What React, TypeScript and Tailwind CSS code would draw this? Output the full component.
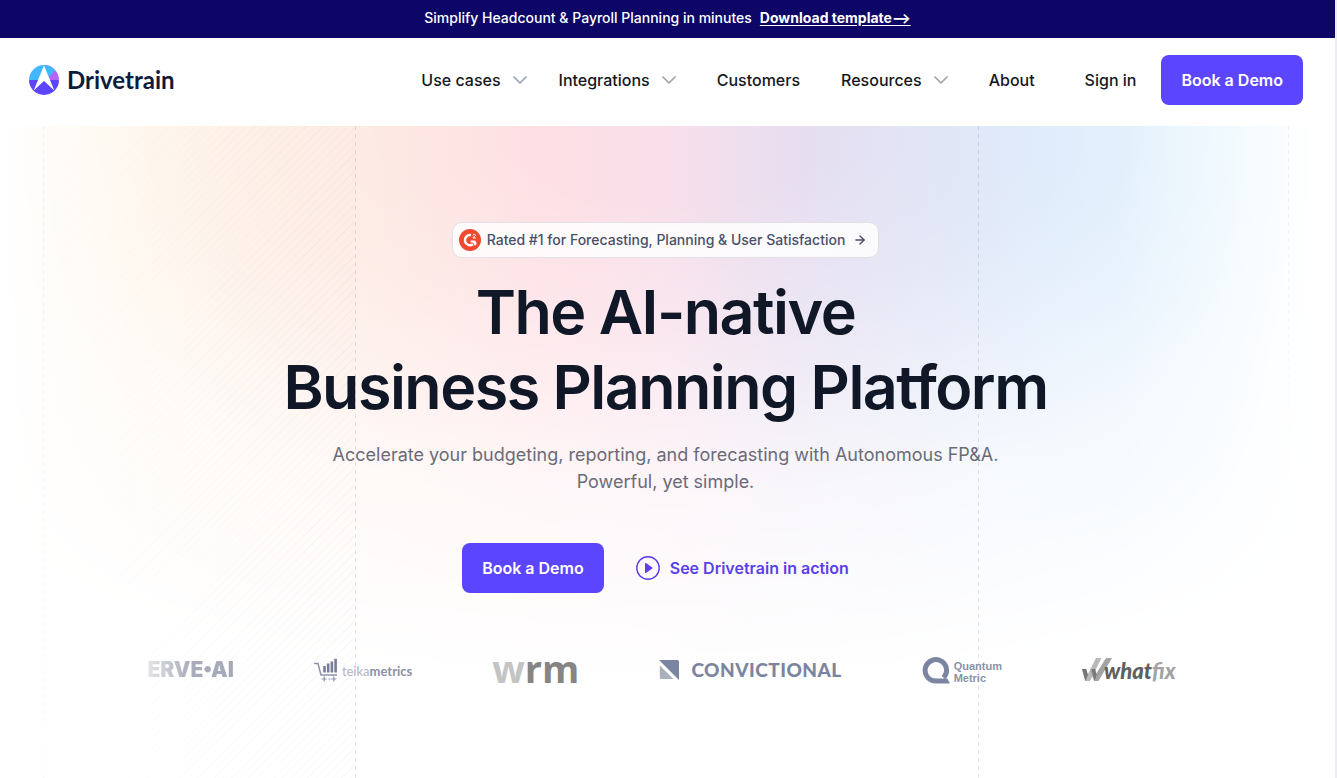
import React from 'react';
import { ArrowRight } from 'lucide-react';

interface NavItem {
  label: string;
  hasMenu?: boolean;
}

const navItems: NavItem[] = [
  { label: 'Use cases', hasMenu: true },
  { label: 'Integrations', hasMenu: true },
  { label: 'Customers' },
  { label: 'Resources', hasMenu: true },
  { label: 'About' },
  { label: 'Sign in' },
];

const Chevron: React.FC = () => (
  <svg width="14" height="8" viewBox="0 0 14 8" fill="none" stroke="#9ca3af" strokeWidth="1.7" strokeLinecap="round" strokeLinejoin="round" aria-hidden="true">
    <path d="M1 1l6 6 6-6" />
  </svg>
);

const BrandMark: React.FC = () => (
  <svg width="30" height="30" viewBox="0 0 30 30" aria-hidden="true">
    <defs>
      <clipPath id="brand-disc">
        <circle cx="15" cy="15" r="15" />
      </clipPath>
    </defs>
    <g clipPath="url(#brand-disc)">
      <path d="M0 0h15v15.2H0z" fill="#41b8fd" />
      <path d="M15 0h15v15.2H15z" fill="#b565f5" />
      <path d="M15 0h10.500v6L18 14z" fill="#41b8fd" />
      <path d="M0 15h30v15H0z" fill="#5b45ff" />
      <path d="M15 0.500L25.300 25.500 15 16 4.700 25.500z" fill="#fff" />
    </g>
  </svg>
);

const G2Mark: React.FC = () => (
  <svg width="22" height="22" viewBox="0 0 22 22" aria-hidden="true">
    <circle cx="11" cy="11" r="11" fill="#ef4a2f" />
    <path d="M12 6.100A5.100 5.100 0 1 0 14 15.200" fill="none" stroke="#fff" strokeWidth="2.500" />
    <path d="M11.500 11.600h4.700l1.500 2.600-1.600 2.700-2.300-3.500h-2z" fill="#fff" />
    <path d="M13.900 6.300c.2-1.300 2.600-1.300 2.500.1-.1 1-2.300 1.300-2.400 2.600h2.800" fill="none" stroke="#fff" strokeWidth="1" />
  </svg>
);

const PlayMark: React.FC = () => (
  <svg width="24" height="24" viewBox="0 0 24 24" aria-hidden="true">
    <circle cx="12" cy="12" r="11.200" fill="none" stroke="currentColor" strokeWidth="1.400" />
    <path d="M9 7.500v9c0 .5.5.7.9.4l6.400-4.400c.4-.3.4-.7 0-1L9.900 7.100c-.4-.3-.9-.1-.9.4z" fill="currentColor" />
  </svg>
);

const CartMark: React.FC = () => (
  <svg width="24" height="24" viewBox="0 0 24 24" fill="none" stroke="#8d93a8" aria-hidden="true">
    <path d="M0 5.500h4l3 11.500h16" strokeWidth="1.500" />
    <path d="M10.500 14.500V8M14.200 14.500V5.500M17.900 14.500V3.500M21.600 14.500V.8" stroke="#777e99" strokeWidth="2.600" />
    <path d="M10.200 18.500v5M7.700 21h5M14.500 21h2M19.800 18.500v5M17.300 21h5" strokeWidth="1.200" />
  </svg>
);

const ConvictionalMark: React.FC = () => (
  <svg width="20" height="20" viewBox="0 0 20 20" aria-hidden="true">
    <path d="M0 0h18.500q1.500 0 1.500 1.500V20z" fill="#7b84a0" />
    <path d="M.8 5.500L14.500 19H2.300Q.8 19 .8 17.500z" fill="#aab0bd" />
  </svg>
);

const QuantumMark: React.FC = () => (
  <svg width="28" height="27" viewBox="0 0 28 27" aria-hidden="true">
    <path d="M21.500 20.800A10.700 10.700 0 1 0 13 24" fill="none" stroke="#7b84a0" strokeWidth="5" />
    <path d="M12 21.500h13.200L28 26.500H13z" fill="#7b84a0" />
  </svg>
);

const WhatfixMark: React.FC = () => (
  <svg width="30" height="24" viewBox="0 0 30 24" aria-hidden="true">
    <path d="M0 11h4.300l1.400 5.500L14 0h5.500L8 23H3z" fill="#b9b9b9" />
    <path d="M8 12h4l1 5.500L24 0h6L16.500 23H12z" fill="#a3a3a3" />
    <path d="M0 11h4.300l1.600 6-2.400 6zM9.500 11h3.700l1.400 6-2 6z" fill="#777" />
  </svg>
);

const DemoButton: React.FC = () => (
  <button type="button" className="rounded-lg bg-[#5b45ff] px-5 py-[13px] text-base leading-6 font-semibold whitespace-nowrap text-white">
    Book a Demo
  </button>
);

const Header: React.FC = () => (
  <header className="flex items-center justify-between bg-white pt-[17px] pr-8 pb-[21px] pl-[29px]">
    <a href="#home" className="flex items-center gap-2">
      <BrandMark />
      <span className="font-[Lato] text-2xl leading-8 font-bold text-[#0d1b3e]">Drivetrain</span>
    </a>
    <nav className="flex items-center text-base font-medium whitespace-nowrap text-[#15171e]">
      {navItems.map((item) =>
        item.hasMenu ? (
          <button key={item.label} type="button" className="flex items-center gap-3 px-4">
            {item.label}
            <Chevron />
          </button>
        ) : (
          <a key={item.label} href="#nav" className="px-[25px]">
            {item.label}
          </a>
        )
      )}
      <DemoButton />
    </nav>
  </header>
);

const Guide: React.FC = () => (
  <div className="w-px shrink-0 bg-[repeating-linear-gradient(180deg,rgba(60,50,80,0.13)_0_4px,transparent_4px_8px)]" />
);

// Soft colour wash with the dashed column guides on top of it
const Backdrop: React.FC = () => (
  <div className="pointer-events-none absolute inset-0" aria-hidden="true">
    <div className="absolute inset-0 bg-[linear-gradient(90deg,#ffffff_0%,#fff8ee_4%,#fef0e0_11%,#fdeade_18%,#fde6df_28%,#fee0e4_40%,#f8dfea_50%,#e6def0_60%,#dde2f5_70%,#d7e6fa_78%,#d5e8fb_84%,#e2f3fd_91%,#ffffff_99%)] [mask-image:radial-gradient(ellipse_84%_86%_at_50%_0%,black_14%,rgba(0,0,0,0.75)_36%,rgba(0,0,0,0.25)_66%,transparent_100%)]" />
    <div className="absolute inset-0 grid grid-cols-4 pr-[46px] pl-[43px]">
      <div className="flex">
        <div className="flex [mask-image:linear-gradient(180deg,rgba(0,0,0,0.5),rgba(0,0,0,0.2))]">
          <Guide />
        </div>
        <div className="flex-1 bg-[repeating-linear-gradient(135deg,transparent_0_5px,rgba(120,100,90,0.04)_5px_6px)] [mask-image:linear-gradient(90deg,transparent,black)]" />
      </div>
      <div className="flex">
        <Guide />
      </div>
      <div />
      <div className="flex justify-between">
        <Guide />
        <div className="flex [mask-image:linear-gradient(180deg,rgba(0,0,0,0.5),transparent_60%)]">
          <Guide />
        </div>
      </div>
    </div>
  </div>
);

const CustomerLogos: React.FC = () => (
  <div className="flex h-8 items-center justify-center gap-20 pr-2 whitespace-nowrap">
    <span className="bg-linear-to-r from-[#e4e5e8] via-[#a9adba] to-[#a4a9b8] bg-clip-text text-[21px] font-black text-transparent">ERVE•AI</span>
    <div className="flex items-center gap-1">
      <CartMark />
      <span className="pt-1 font-[Lato] text-[13px] text-[#b0b4c2]">
        teika<span className="font-bold text-[#8b91a7]">metrics</span>
      </span>
    </div>
    <span className="pb-1 font-['Open_Sans'] text-[38px] leading-8 font-bold text-[#858585]">
      <span className="text-[#c4c4c4]">w</span>rm
    </span>
    <div className="flex items-center gap-3">
      <ConvictionalMark />
      <span className="font-[Lato] text-[19px] font-black tracking-wide text-[#7b84a0]">CONVICTIONAL</span>
    </div>
    <div className="flex items-center gap-1">
      <QuantumMark />
      <span className="pt-1 text-left font-['Liberation_Sans'] text-[11px] leading-3 font-bold text-[#8a91a8]">
        Quantum
        <br />
        Metric
      </span>
    </div>
    <div className="flex items-center">
      <WhatfixMark />
      <span className="-ml-2 font-[Lato] text-[22px] font-black text-[#5f5f5f] italic">
        what<span className="text-[#a3a3a3]">fix</span>
      </span>
    </div>
  </div>
);

export default function App() {
  return (
    <div className="flex min-h-screen flex-col overflow-x-hidden border-r-2 border-[#ececf1] bg-white font-[Inter,sans-serif]">
      <div className="flex items-center justify-center gap-2 bg-[#0d0667] px-4 pt-[7px] pb-[9px] text-sm leading-[22px] text-white">
        <span className="font-medium">Simplify Headcount &amp; Payroll Planning in minutes</span>
        <a href="#template" className="font-bold underline underline-offset-2">
          Download template⟶
        </a>
      </div>
      <Header />
      <main className="relative flex-1 bg-white">
        <Backdrop />
        <section className="relative flex flex-col items-center pt-24 pr-9 pl-8 text-center">
          <a href="#reviews" className="flex items-center rounded-[10px] border border-[#e3dfe6] bg-white/85 py-[6px] pr-[11px] pl-[6px] text-sm leading-[22px] font-medium text-[#475069]">
            <G2Mark />
            <span className="mr-2 ml-[6px]">Rated #1 for Forecasting, Planning &amp; User Satisfaction</span>
            <ArrowRight size={14} strokeWidth={2.4} />
          </a>
          <h1 className="mt-[17px] text-[61px] leading-[75px] font-semibold tracking-tight text-[#101828]">
            The AI-native
            <br />
            Business Planning Platform
          </h1>
          <p className="mt-4 text-lg leading-[27px] text-[#6b6b78]">
            Accelerate your budgeting, reporting, and forecasting with Autonomous FP&amp;A.
            <br />
            Powerful, yet simple.
          </p>
          <div className="mt-12 flex items-center gap-8 pr-5">
            <DemoButton />
            <a href="#tour" className="flex items-center gap-[10px] text-base font-semibold text-[#5b3fe8]">
              <PlayMark />
              See Drivetrain in action
            </a>
          </div>
          <div className="mt-[61px]">
            <CustomerLogos />
          </div>
        </section>
      </main>
    </div>
  );
}
